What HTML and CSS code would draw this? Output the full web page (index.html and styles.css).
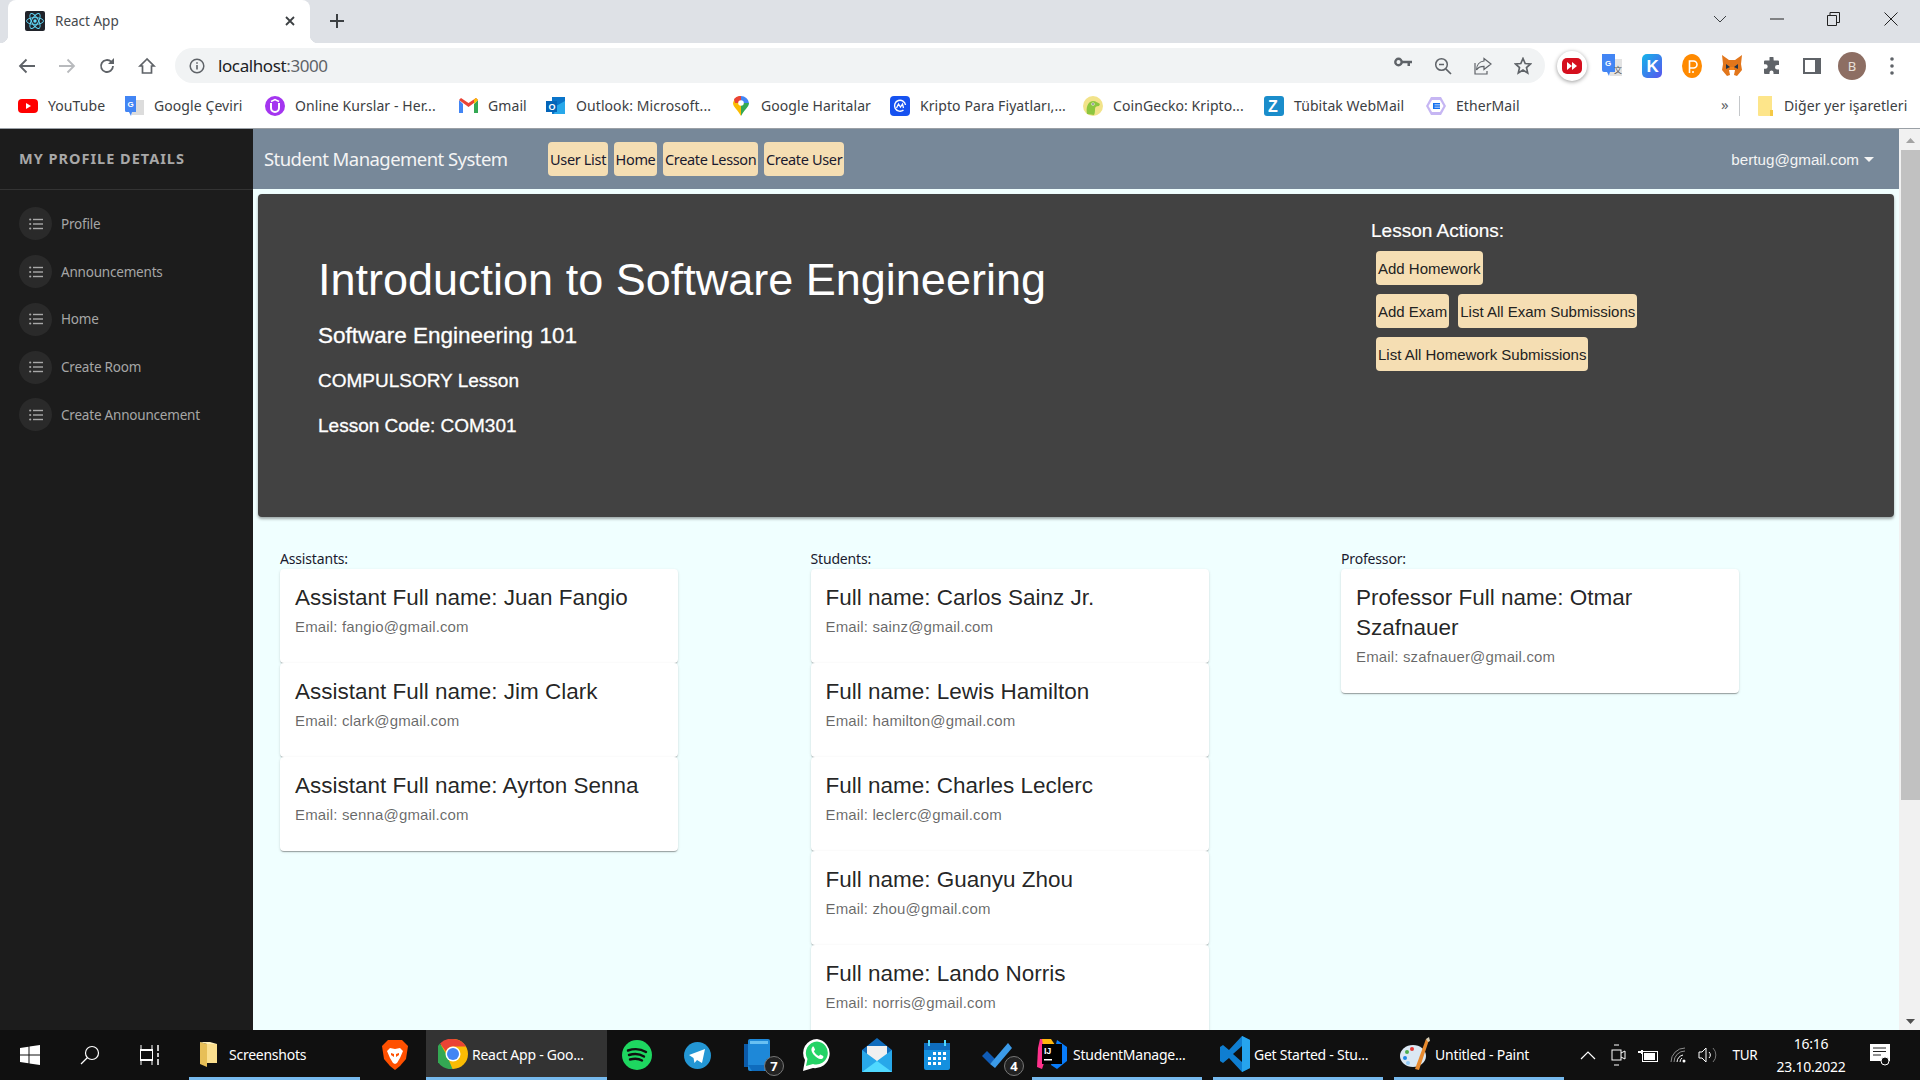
FILE: index.html
```html
<!DOCTYPE html>
<html lang="tr">
<head>
<meta charset="utf-8">
<title>React App</title>
<link rel="stylesheet" href="styles.css">
</head>
<body>
<svg class="defs" width="0" height="0" aria-hidden="true">
  <symbol id="list" viewBox="0 0 14 12"><g fill="#a8a8a8"><circle cx="1.2" cy="1.5" r="1.1"/><circle cx="1.2" cy="6" r="1.1"/><circle cx="1.2" cy="10.5" r="1.1"/><rect x="4" y=".8" width="10" height="1.4"/><rect x="4" y="5.3" width="10" height="1.4"/><rect x="4" y="9.8" width="10" height="1.4"/></g></symbol>
</svg>

<div class="tabstrip">
  <div class="tab">
    <span class="favicon"><svg width="20" height="20" viewBox="0 0 20 20"><rect width="20" height="20" rx="2" fill="#20232a"/><g fill="none" stroke="#61dafb" stroke-width=".9"><ellipse cx="10" cy="10" rx="8.5" ry="3.4"/><ellipse cx="10" cy="10" rx="8.5" ry="3.4" transform="rotate(60 10 10)"/><ellipse cx="10" cy="10" rx="8.5" ry="3.4" transform="rotate(120 10 10)"/></g><circle cx="10" cy="10" r="1.7" fill="#61dafb"/></svg></span>
    <span class="tab-title">React App</span>
    <svg class="tab-close" width="12" height="12" viewBox="0 0 12 12"><path d="M2 2l8 8M10 2l-8 8" stroke="#3c4043" stroke-width="1.8"/></svg>
  </div>
  <svg class="newtab" width="16" height="16" viewBox="0 0 16 16"><path d="M8 1v14M1 8h14" stroke="#3c4043" stroke-width="2"/></svg>
  <div class="winctl">
    <span class="win win-chev"><svg width="14" height="8" viewBox="0 0 14 8"><path d="M1 1l6 6 6-6" fill="none" stroke="#3c4043"/></svg></span>
    <span class="win win-min"><svg width="14" height="2" viewBox="0 0 14 2"><path d="M0 1h14" stroke="#222"/></svg></span>
    <span class="win"><svg width="13" height="14" viewBox="0 0 13 14"><path d="M.5 3.5h9v10h-9zM3 3.5V.5h9.500v10H9.500" fill="none" stroke="#222"/></svg></span>
    <span class="win"><svg width="14" height="14" viewBox="0 0 14 14"><path d="M.5.5l13 13M13.500.5l-13 13" stroke="#222"/></svg></span>
  </div>
</div>

<div class="toolbar">
  <span class="tb"><svg width="18" height="16" viewBox="0 0 18 16"><path d="M17 8H2M8.500 1.500L2 8l6.500 6.500" fill="none" stroke="#5f6368" stroke-width="1.800"/></svg></span>
  <span class="tb"><svg width="18" height="16" viewBox="0 0 18 16"><path d="M1 8h15M9.500 1.500L16 8l-6.500 6.500" fill="none" stroke="#b8babd" stroke-width="1.800"/></svg></span>
  <span class="tb"><svg width="18" height="18" viewBox="0 0 18 18"><path d="M15 9a6 6 0 1 1-1.800-4.300" fill="none" stroke="#5f6368" stroke-width="1.800"/><path d="M16 1v6h-6z" fill="#5f6368"/></svg></span>
  <span class="tb"><svg width="18" height="18" viewBox="0 0 18 18"><path d="M9 2L2 9h2.500v7h9V9H16z" fill="none" stroke="#5f6368" stroke-width="1.700"/></svg></span>
  <div class="omni">
    <svg class="omni-info" width="16" height="16" viewBox="0 0 16 16"><circle cx="8" cy="8" r="6.800" fill="none" stroke="#5f6368" stroke-width="1.500"/><path d="M8 7v4.500M8 4.200v1.600" stroke="#5f6368" stroke-width="1.600"/></svg>
    <span class="omni-url"><span class="url-host">localhost</span>:3000</span>
    <div class="omni-right">
      <span class="oi"><svg width="18" height="10" viewBox="0 0 18 10"><circle cx="4.500" cy="5" r="3.200" fill="none" stroke="#5f6368" stroke-width="2.400"/><path d="M8 3.800h10v2.500h-2V9h-2.500V6.300H8z" fill="#5f6368"/></svg></span>
      <span class="oi"><svg width="18" height="18" viewBox="0 0 18 18"><circle cx="7.500" cy="7.500" r="5.800" fill="none" stroke="#5f6368" stroke-width="1.500"/><path d="M11.800 11.800L17 17" stroke="#5f6368" stroke-width="1.700"/><path d="M5 7.500h5" stroke="#5f6368" stroke-width="1.500"/></svg></span>
      <span class="oi"><svg width="18" height="18" viewBox="0 0 18 18"><path d="M10 1.500l7 5.500-7 5.500V9.300C6 9.300 3.500 11 2.500 13c0-5 3-8.500 7.500-9z" fill="none" stroke="#5f6368" stroke-width="1.200"/><path d="M1 6v11h12v-3" fill="none" stroke="#5f6368" stroke-width="1.200"/></svg></span>
      <span class="oi"><svg width="18" height="18" viewBox="0 0 18 18"><path d="M9 1.500l2.200 5 5.300.5-4 3.600 1.200 5.300L9 13.100l-4.700 2.800 1.200-5.300-4-3.600 5.300-.5z" fill="none" stroke="#5f6368" stroke-width="1.700"/></svg></span>
    </div>
  </div>
  <span class="ext"><span class="ff-badge"><svg width="20" height="16" viewBox="0 0 20 16"><rect width="20" height="16" rx="5" fill="#d50f1e"/><path d="M5 4l5 4-5 4zM10 4l5 4-5 4z" fill="#fff"/></svg></span></span>
  <span class="ext"><svg width="20" height="24" viewBox="0 0 20 24"><rect x="8" y="5" width="12" height="17" fill="#e3e3e3"/><path d="M0 0h13v18H8l-1 4-2-4H2a2 2 0 0 1-2-2z" fill="#4285f4"/><text x="3" y="12" class="svg-g">G</text><text x="12" y="19" class="svg-x">文</text></svg></span>
  <span class="ext"><svg width="20" height="24" viewBox="0 0 20 24"><defs><linearGradient id="kg" x1="0" y1="0" x2="1" y2="1"><stop offset="0" stop-color="#13b6e9"/><stop offset="1" stop-color="#5a54ee"/></linearGradient></defs><rect width="20" height="24" rx="5" fill="url(#kg)"/><text x="4.500" y="18" class="svg-k">K</text></svg></span>
  <span class="ext"><svg width="20" height="24" viewBox="0 0 20 24"><ellipse cx="10" cy="12" rx="10" ry="12" fill="#ff8a00"/><path d="M7.500 19V7h4a3.500 3.500 0 0 1 0 7H8" fill="none" stroke="#fff" stroke-width="1.600"/><circle cx="11" cy="18" r="1" fill="#fff"/></svg></span>
  <span class="ext"><svg width="22" height="24" viewBox="0 0 22 24"><path d="M1 1l7 5h6l7-5-1 9 1 6-5 6-3-1H9l-3 1-5-6 1-6z" fill="#e2761b"/><path d="M8 16h6l-1 5H9z" fill="#fff"/><path d="M5 10l4 3-4 2zM17 10l-4 3 4 2z" fill="#233447"/><path d="M9 13h4v3H9z" fill="#f6851b"/></svg></span>
  <span class="ext"><svg width="18" height="18" viewBox="0 0 18 18"><path d="M6.500 1a2 2 0 0 1 4 0l.2 2.500H15a1 1 0 0 1 1 1V8h-1.700a2.300 2.300 0 0 0 0 4.600H16V17H10.500v-1.500a2 2 0 0 0-4 0V17H2a1 1 0 0 1-1-1v-4.300h1.500a2.200 2.200 0 0 0 0-4.400H1V4.500a1 1 0 0 1 1-1h4.500z" fill="#5f6368"/></svg></span>
  <span class="ext"><svg width="18" height="16" viewBox="0 0 18 16"><rect width="18" height="16" fill="#5f6368"/><rect x="2" y="2" width="10" height="12" fill="#fff"/></svg></span>
  <span class="ext"><span class="avatar">B</span></span>
  <span class="ext"><svg width="4" height="18" viewBox="0 0 4 18"><circle cx="2" cy="2" r="1.800" fill="#5f6368"/><circle cx="2" cy="9" r="1.800" fill="#5f6368"/><circle cx="2" cy="16" r="1.800" fill="#5f6368"/></svg></span>
</div>

<div class="bookmarks">
  <a class="bm bm-yt"><svg width="20" height="14" viewBox="0 0 20 14"><rect width="20" height="14" rx="4" fill="#f00"/><path d="M8 4l5 3-5 3z" fill="#fff"/></svg>YouTube</a>
  <a class="bm bm-gt"><svg width="19" height="20" viewBox="0 0 19 20"><rect x="7" y="4" width="12" height="15" fill="#dcdcdc"/><path d="M0 0h11v16H7l-1 4-2-4H1.500A1.500 1.500 0 0 1 0 14.500z" fill="#4285f4"/><text x="2.500" y="10.500" class="svg-g">G</text></svg>Google Çeviri</a>
  <a class="bm bm-ud"><svg width="20" height="20" viewBox="0 0 20 20"><circle cx="10" cy="10" r="10" fill="#a435f0"/><path d="M6 7v5a4 4 0 0 0 8 0V7" fill="none" stroke="#fff" stroke-width="2"/><path d="M6 5.500l4-2 4 2" fill="none" stroke="#fff" stroke-width="1.500"/></svg>Online Kurslar - Her...</a>
  <a class="bm bm-gm"><svg width="19" height="15" viewBox="0 0 19 15"><path d="M0 2v13h4V6z" fill="#4285f4"/><path d="M15 6v9h4V2z" fill="#34a853"/><path d="M0 2l9.500 7L19 2l-2-2-7.500 5L2 0z" fill="#ea4335"/><path d="M15 6l4-4-2-2-2 1.500z" fill="#fbbc04"/></svg>Gmail</a>
  <a class="bm bm-ol"><svg width="20" height="20" viewBox="0 0 20 20"><path d="M6 1h13v17H6z" fill="#0a74c9"/><path d="M10 10l9-5v13H8z" fill="#28a8ea"/><rect y="5" width="11" height="11" fill="#0364b8"/><text x="2.500" y="13.500" class="svg-o">O</text></svg>Outlook: Microsoft...</a>
  <a class="bm bm-gmap"><svg width="16" height="20" viewBox="0 0 16 20"><path d="M8 20C5 14 0 11 0 7a8 8 0 0 1 8-7z" fill="#fbbc04"/><path d="M8 20c3-6 8-9 8-13H8z" fill="#34a853"/><path d="M8 0a8 8 0 0 1 8 7H8z" fill="#4285f4"/><path d="M1 3a8 8 0 0 1 7-3v7H2z" fill="#ea4335"/><circle cx="8" cy="7" r="2.800" fill="#fff"/></svg>Google Haritalar</a>
  <a class="bm bm-cmc"><svg width="20" height="20" viewBox="0 0 20 20"><rect width="20" height="20" rx="4" fill="#1652f0"/><path d="M15.500 9a5.500 5.500 0 1 0-2 5" fill="none" stroke="#fff" stroke-width="1.400"/><path d="M6.500 12l2-4 2 3 2-3 1 4" fill="none" stroke="#fff" stroke-width="1.300"/></svg>Kripto Para Fiyatları,...</a>
  <a class="bm bm-cg"><svg width="20" height="20" viewBox="0 0 20 20"><circle cx="10" cy="10" r="10" fill="#f2e38a"/><path d="M4 18c-1-6 0-12 6-13 3 0 5 2 7 3l-1 2c-3 0-4 1-4 3s0 4-1 6z" fill="#8dc63f"/><circle cx="10" cy="8" r="1.600" fill="#fff"/><circle cx="10" cy="8" r=".8" fill="#333"/></svg>CoinGecko: Kripto...</a>
  <a class="bm bm-tb"><svg width="20" height="20" viewBox="0 0 20 20"><rect width="20" height="20" rx="3" fill="#1a8dcb"/><text x="4" y="16" class="svg-z">Z</text></svg>Tübitak WebMail</a>
  <a class="bm bm-em"><svg width="20" height="20" viewBox="0 0 20 20"><path d="M5 1h10l5 9-5 9H5l-5-9z" fill="#c6b6f3"/><path d="M6 4h8l3.500 6L14 16H6l-3.500-6z" fill="#fff"/><path d="M7 7h7v1.500H8.500v.8H14v1.400H8.500v.8H14V13H7z" fill="#1470ef"/></svg>EtherMail</a>
  <span class="bm-more">»</span>
  <span class="bm-sep"></span>
  <a class="bm bm-other"><svg width="15" height="20" viewBox="0 0 15 20"><path d="M0 1a1 1 0 0 1 1-1h13v20H1a1 1 0 0 1-1-1z" fill="#fde58a"/><path d="M12 14h3v6h-3z" fill="#f5c945"/></svg>Diğer yer işaretleri</a>
</div>

<div class="viewport">
  <aside class="sidebar">
    <div class="side-head">MY PROFILE DETAILS</div>
    <nav class="side-nav">
      <a class="side-item"><span class="side-ic"><svg width="14" height="12"><use href="#list"/></svg></span>Profile</a>
      <a class="side-item"><span class="side-ic"><svg width="14" height="12"><use href="#list"/></svg></span>Announcements</a>
      <a class="side-item"><span class="side-ic"><svg width="14" height="12"><use href="#list"/></svg></span>Home</a>
      <a class="side-item"><span class="side-ic"><svg width="14" height="12"><use href="#list"/></svg></span>Create Room</a>
      <a class="side-item"><span class="side-ic"><svg width="14" height="12"><use href="#list"/></svg></span>Create Announcement</a>
    </nav>
  </aside>

  <main class="main">
    <header class="navbar">
      <span class="brand">Student Management System</span>
      <div class="navlinks">
        <button class="wheat">User List</button>
        <button class="wheat">Home</button>
        <button class="wheat">Create Lesson</button>
        <button class="wheat">Create User</button>
      </div>
      <span class="user">bertug@gmail.com<i class="caret"></i></span>
    </header>

    <section class="hero">
      <div class="hero-left">
        <h1>Introduction to Software Engineering</h1>
        <h2>Software Engineering 101</h2>
        <h3>COMPULSORY Lesson</h3>
        <h3 class="code">Lesson Code: COM301</h3>
      </div>
      <div class="hero-right">
        <h4>Lesson Actions:</h4>
        <div class="act-row"><button class="act">Add Homework</button></div>
        <div class="act-row"><button class="act">Add Exam</button><button class="act">List All Exam Submissions</button></div>
        <div class="act-row"><button class="act">List All Homework Submissions</button></div>
      </div>
    </section>

    <section class="cols">
      <div class="col">
        <div class="col-label">Assistants:</div>
        <article class="card"><h5>Assistant Full name: Juan Fangio</h5><p>Email: fangio@gmail.com</p></article>
        <article class="card"><h5>Assistant Full name: Jim Clark</h5><p>Email: clark@gmail.com</p></article>
        <article class="card"><h5>Assistant Full name: Ayrton Senna</h5><p>Email: senna@gmail.com</p></article>
      </div>
      <div class="col">
        <div class="col-label">Students:</div>
        <article class="card"><h5>Full name: Carlos Sainz Jr.</h5><p>Email: sainz@gmail.com</p></article>
        <article class="card"><h5>Full name: Lewis Hamilton</h5><p>Email: hamilton@gmail.com</p></article>
        <article class="card"><h5>Full name: Charles Leclerc</h5><p>Email: leclerc@gmail.com</p></article>
        <article class="card"><h5>Full name: Guanyu Zhou</h5><p>Email: zhou@gmail.com</p></article>
        <article class="card"><h5>Full name: Lando Norris</h5><p>Email: norris@gmail.com</p></article>
      </div>
      <div class="col">
        <div class="col-label">Professor:</div>
        <article class="card"><h5>Professor Full name: Otmar Szafnauer</h5><p>Email: szafnauer@gmail.com</p></article>
      </div>
    </section>
  </main>

  <div class="scrollbar">
    <svg class="sb-arrow" width="9" height="5" viewBox="0 0 9 5"><path d="M4.500 0L9 5H0z" fill="#a3a3a3"/></svg>
    <div class="sb-thumb"></div>
    <svg class="sb-arrow sb-down" width="9" height="5" viewBox="0 0 9 5"><path d="M4.500 5L9 0H0z" fill="#505050"/></svg>
  </div>
</div>

<footer class="taskbar">
  <span class="tk tk-win"><svg width="20" height="20" viewBox="0 0 20 20"><path d="M0 3l8.500-1.200v7.700H0zM9.500 1.600L20 0v9.500H9.500zM0 10.500h8.500v7.700L0 17zM9.500 10.500H20V20L9.500 18.400z" fill="#fff"/></svg></span>
  <span class="tk tk-search"><svg width="20" height="20" viewBox="0 0 20 20"><circle cx="12" cy="8" r="6.500" fill="none" stroke="#fff" stroke-width="1.200"/><path d="M7.500 12.500L1 19" stroke="#fff" stroke-width="1.200"/></svg></span>
  <span class="tk tk-view"><svg width="20" height="20" viewBox="0 0 20 20"><path d="M0 4.500h13M0 15.500h13M1 5v-5M12 5v-5M1 15v5M12 15v5" fill="none" stroke="#fff"/><rect x=".5" y="5.500" width="12" height="9" fill="none" stroke="#fff"/><path d="M18 0v6M18 8v4M18 14v6" stroke="#fff" stroke-width="1.500"/></svg></span>
  <span class="app app-shots"><svg width="18" height="26" viewBox="0 0 18 26"><path d="M0 1l7 2v23l-7-3z" fill="#e7bf57"/><path d="M7 3h10v19H7z" fill="#fbdf8e"/><path d="M0 1h10l7 2H7z" fill="#fff0b8"/></svg><span>Screenshots</span></span>
  <span class="tk tk-brave"><svg width="26" height="30" viewBox="0 0 26 30"><path d="M6 0h14l3 3 3 3-2 13-6 7-5 4-5-4-6-7L0 6l3-3z" fill="#ff5000"/><path d="M8 8l5 1 5-1 3 3-3 7-3 5-2 1-2-1-3-5-3-7z" fill="#fff"/><path d="M9 13l3 1v3l-3-2zM17 13l-3 1v3l3-2z" fill="#ff5000"/></svg></span>
  <span class="app app-active app-chrome"><svg width="30" height="30" viewBox="0 0 30 30"><circle cx="15" cy="15" r="15" fill="#fbbc04"/><path d="M15 0a15 15 0 0 1 13 7.500H15a7.500 7.500 0 0 0-7 5L2 4.500A15 15 0 0 1 15 0z" fill="#ea4335"/><path d="M2 4.500l6.500 11 6 14.500A15 15 0 0 1 2 4.500z" fill="#34a853"/><circle cx="15" cy="15" r="7.500" fill="#fff"/><circle cx="15" cy="15" r="6" fill="#4285f4"/></svg><span>React App - Goo...</span></span>
  <span class="tk tk-spot"><svg width="30" height="30" viewBox="0 0 30 30"><circle cx="15" cy="15" r="15" fill="#1ed760"/><path d="M6 10.500c6-2 13-1.500 18 1.500M7 15c5-1.500 11-1 15 1.500M8 19.500c4-1 9-.8 12 1" fill="none" stroke="#101010" stroke-width="2.400" stroke-linecap="round"/></svg></span>
  <span class="tk tk-tg"><svg width="27" height="27" viewBox="0 0 27 27"><circle cx="13.500" cy="13.500" r="13.500" fill="#2396d4"/><path d="M5 13l16-6-3 14-5-3-2.500 3-1-5z" fill="#fff"/></svg></span>
  <span class="tk tk-phone"><svg width="26" height="32" viewBox="0 0 26 32"><path d="M0 5h7v23H0z" fill="#0b5aa8"/><rect x="4" width="22" height="32" rx="2" fill="#1e88d8"/><path d="M6 2h18v3H6z" fill="#69c0f2"/><path d="M4 26h16v6H8z" fill="#0f6cbd"/></svg><span class="badge">7</span></span>
  <span class="tk tk-wa"><svg width="30" height="36" viewBox="0 0 30 36"><path d="M15 2a14 14 0 0 0-12 21L1 34l10-3A14 14 0 1 0 15 2z" fill="#fff"/><path d="M15 4.500A11.500 11.500 0 0 0 5.500 22l-1.500 7 7-2A11.500 11.500 0 1 0 15 4.500z" fill="#25d366"/><path d="M10.500 10c-2 2-1 5 1.500 8s6 5 8.500 3.500c1-.7 1-2 .7-2.500l-3-1.500-1.300 1.500c-2-.7-4-2.700-5-4.800l1.200-1.400-1.300-3c-.5-.5-1.500-.5-1.300-.3z" fill="#fff"/></svg></span>
  <span class="tk tk-mail"><svg width="30" height="34" viewBox="0 0 30 34"><path d="M15 0L0 12v22h30V12z" fill="#0f6cbd"/><path d="M5 8h20v12l-10 5-10-5z" fill="#f0f0f0"/><path d="M0 12l15 11 15-11v22H0z" fill="#28a8ea"/><path d="M0 34l15-11 15 11z" fill="#50d9ff"/></svg></span>
  <span class="tk tk-cal"><svg width="26" height="30" viewBox="0 0 26 30"><rect y="3" width="26" height="27" rx="2" fill="#1490df"/><rect y="3" width="26" height="7" fill="#0f6cbd"/><path d="M4 0h2v6H4zM20 0h2v6h-2z" fill="#50d9ff"/><g fill="#fff"><rect x="9" y="12" width="3" height="3"/><rect x="14" y="12" width="3" height="3"/><rect x="19" y="12" width="3" height="3"/><rect x="4" y="17" width="3" height="3"/><rect x="9" y="17" width="3" height="3"/><rect x="14" y="17" width="3" height="3"/><rect x="19" y="17" width="3" height="3"/><rect x="4" y="22" width="3" height="3"/><rect x="9" y="22" width="3" height="3"/><rect x="14" y="22" width="3" height="3"/></g></svg></span>
  <span class="tk tk-todo"><svg width="30" height="26" viewBox="0 0 30 26"><path d="M0 14l5-5 8 8-5 5z" fill="#0f5bb5"/><path d="M8 22L26 1l4 5-17 20z" fill="#3b9ae8"/></svg><span class="badge">4</span></span>
  <span class="app app-ij"><svg width="30" height="30" viewBox="0 0 30 30"><path d="M3 0h9l2 4-9 26-5-2L1 9z" fill="#ff318c"/><path d="M5 0h9l4 6H6z" fill="#fdb60d"/><path d="M20 1l10 7v14l-10 8-6-4z" fill="#087cfa"/><rect x="5" y="5" width="20" height="20" fill="#000"/><text x="7" y="15" class="svg-ij">IJ</text><rect x="7" y="20" width="8" height="1.500" fill="#fff"/></svg><span>StudentManage...</span></span>
  <span class="app app-vs"><svg width="30" height="36" viewBox="0 0 30 36"><path d="M22 0l8 4v28l-8 4-13-14-6 5-3-2V11l3-2 6 5zM22 10l-9 8 9 8z" fill="#0f7ed1"/><path d="M22 0l8 4v28l-8 4z" fill="#26a4ee"/></svg><span>Get Started - Stu...</span></span>
  <span class="app app-paint"><svg width="30" height="34" viewBox="0 0 30 34"><ellipse cx="13" cy="19" rx="13" ry="11" fill="#dbe8f3"/><circle cx="7" cy="15" r="2" fill="#4caf50"/><circle cx="12" cy="12" r="2" fill="#e53935"/><circle cx="5" cy="21" r="2" fill="#1e88e5"/><circle cx="8" cy="26" r="2" fill="#90caf9"/><path d="M15 32L26 2l3 1-10 30z" fill="#e88a2e"/><path d="M26 2l3-2 1 4-2 1z" fill="#d9d0b8"/></svg><span>Untitled - Paint</span></span>
  <span class="tray t-up"><svg width="16" height="9" viewBox="0 0 16 9"><path d="M1 8l7-7 7 7" fill="none" stroke="#fff" stroke-width="1.200"/></svg></span>
  <span class="tray"><svg width="15" height="22" viewBox="0 0 15 22"><rect x="1" y="6" width="9" height="10" fill="none" stroke="#fff"/><path d="M10 9l4-2v8l-4-2M3 1h5M3 21h5" fill="none" stroke="#fff"/></svg></span>
  <span class="tray"><svg width="20" height="13" viewBox="0 0 20 13"><path d="M0 2h3v2H0zM3 1h2v4H3z" fill="#fff"/><rect x="4.500" y="2.500" width="15" height="10" fill="none" stroke="#fff"/><rect x="6" y="4" width="11" height="7" fill="#fff"/></svg></span>
  <span class="tray"><svg width="16" height="16" viewBox="0 0 16 16"><path d="M1 15A14 14 0 0 1 15 1M4 15A11 11 0 0 1 15 4" fill="none" stroke="#8e8e8e"/><path d="M7 15A8 8 0 0 1 13 8M10 15a5 5 0 0 1 2-4" fill="none" stroke="#fff"/><circle cx="14" cy="14" r="1.500" fill="#fff"/></svg></span>
  <span class="tray"><svg width="20" height="18" viewBox="0 0 20 18"><path d="M1 6h3l4-4v14l-4-4H1z" fill="none" stroke="#fff"/><path d="M11 6a4 4 0 0 1 0 6" fill="none" stroke="#fff"/><path d="M15 2a10 10 0 0 1 0 14" fill="none" stroke="#777"/></svg></span>
  <span class="tray-lang">TUR</span>
  <span class="clock"><span>16:16</span><span>23.10.2022</span></span>
  <span class="notif"><svg width="20" height="22" viewBox="0 0 20 22"><path d="M0 0h20v17H0z" fill="#fff"/><path d="M3 4h13M3 7.500h13M3 11h8" stroke="#222"/><circle cx="15" cy="17" r="4" fill="#101010" stroke="#fff"/></svg></span>
</footer>
</body>
</html>
```

FILE: styles.css
```css
* { box-sizing: border-box; }
html, body { margin: 0; height: 100%; }
body {
  display: flex;
  flex-direction: column;
  height: 100vh;
  overflow: hidden;
  font-family: "Noto Sans", "Open Sans", sans-serif;
  background: #fff;
}
.defs { position: absolute; }
a { color: inherit; text-decoration: none; }
svg { display: block; flex: none; }
button { font: inherit; cursor: pointer; }

/* browser chrome */
.tabstrip { display: flex; align-items: stretch; height: 43px; padding-left: 8px; background: #dee1e6; flex: none; }
.tab { position: relative; display: flex; align-items: center; width: 302px; background: #fff; border-radius: 8px 8px 0 0; padding: 0 14px 2px 17px; font-size: 13.5px; letter-spacing: 0; color: #45494d; }
.tab::before, .tab::after { content: ""; position: absolute; bottom: 0; width: 8px; height: 8px; }
.tab::before { left: -8px; background: radial-gradient(circle at 0 0, #dee1e6 8px, #fff 8.5px); }
.tab::after { right: -8px; background: radial-gradient(circle at 100% 0, #dee1e6 8px, #fff 8.5px); }
.favicon { margin-right: 10px; }
.tab-close { margin-left: auto; margin-right: 0; }
.newtab { align-self: center; margin-left: 19px; margin-top: -1px; }
.winctl { display: flex; margin-left: auto; }
.win { width: 58px; display: flex; align-items: center; justify-content: center; padding-bottom: 6px; }
.win-chev { width: 52px; }
.win-min { padding-left: 3px; }

.toolbar { display: flex; align-items: center; height: 45px; padding: 0 8px 0 7px; background: #fff; flex: none; }
.tb { width: 40px; display: flex; justify-content: center; }
.omni { display: flex; align-items: center; flex: 1; height: 35px; margin: 0 7px 0 8px; padding-left: 14px; background: #f1f3f4; border-radius: 18px; }
.omni-url { margin-left: 13px; font-size: 17px; letter-spacing: -.4px; color: #5f6368; }
.url-host { color: #202124; }
.omni-right { display: flex; margin-left: auto; padding-right: 2px; }
.oi { width: 40px; display: flex; justify-content: center; }
.ext { width: 40px; display: flex; justify-content: center; align-items: center; }
.ff-badge { width: 30px; height: 30px; border-radius: 50%; background: #fff; box-shadow: 0 1px 4px rgba(0,0,0,.4); display: flex; align-items: center; justify-content: center; }
.avatar { width: 28px; height: 28px; border-radius: 50%; background: #8d6e63; color: #e8e0dc; font-size: 13px; display: flex; align-items: center; justify-content: center; }
.svg-g { font: 700 8px "Liberation Sans", sans-serif; fill: #fff; }
.svg-x { font: 8px "Noto Sans CJK SC", sans-serif; fill: #555; }
.svg-k { font: 700 17px "Liberation Sans", sans-serif; fill: #fff; }
.svg-o { font: 700 9px "Liberation Sans", sans-serif; fill: #fff; }
.svg-z { font: 700 16px "Liberation Sans", sans-serif; fill: #fff; }
.svg-ij { font: 700 9px "Liberation Sans", sans-serif; fill: #fff; }

.bookmarks { display: flex; align-items: center; height: 41px; padding: 0 0 5px 18px; background: #fff; border-bottom: 1px solid #9aa0a6; flex: none; }
.bm { display: flex; align-items: center; gap: 10px; font-size: 14px; letter-spacing: .08px; color: #3c4043; white-space: nowrap; }
.bm-yt { width: 107px; }
.bm-gt { width: 140px; }
.bm-ud { width: 194px; }
.bm-gm { width: 87px; }
.bm-ol { width: 187px; }
.bm-gmap { width: 157px; gap: 12px; }
.bm-cmc { width: 193px; }
.bm-cg { width: 181px; }
.bm-tb { width: 162px; }
.bm-em { width: 296px; }
.bm-more { width: 18px; font-size: 15px; color: #5f6368; margin-left: -1px; padding-bottom: 3px; }
.bm-sep { width: 1px; height: 20px; background: #c4c7ca; margin-right: 18px; }
.bm-other { gap: 11px; }

/* page */
.viewport { flex: 1; min-height: 0; display: flex; overflow: hidden; background: #f0ffff; }
.sidebar { width: 253px; flex: none; background: #1c1c1c; color: #a6a6a6; font-size: 13.5px; letter-spacing: -.2px; }
.side-head { height: 61px; padding: 0 0 2px 19px; display: flex; align-items: center; border-bottom: 1px solid #333; font-weight: 700; font-size: 14.5px; letter-spacing: 1px; color: #a8a8a8; }
.side-nav { padding-top: 10px; }
.side-item { display: flex; align-items: center; height: 47.75px; padding-left: 19px; gap: 9px; }
.side-ic { width: 33px; height: 33px; border-radius: 50%; background: #2a2a2a; display: flex; align-items: center; justify-content: center; }

.main { flex: 1; min-width: 0; display: flex; flex-direction: column; }
.navbar { height: 60px; flex: none; display: flex; align-items: center; padding: 0 25px 0 11px; background: #778899; color: #f4f4f4; }
.brand { font-size: 18.5px; letter-spacing: -.55px; width: 284px; white-space: nowrap; padding-bottom: 2px; }
.navlinks { display: flex; gap: 5.5px; }
.wheat { height: 34px; padding: 0 2px; border: 0; border-radius: 4px; background: #f5deb3; color: #1a1a2e; font-size: 14.5px; letter-spacing: -.33px; }
.user { margin-left: auto; display: flex; align-items: center; font: 15.2px "Liberation Sans", sans-serif; color: #f4f4f4; }
.caret { width: 0; height: 0; margin-left: 5px; border: 5px solid transparent; border-top-color: #f4f4f4; border-bottom: 0; }

.hero { flex: none; height: 323px; margin: 5px 5px 0; display: flex; background: #424242; border-radius: 4px; color: #fff; font-family: "Liberation Sans", sans-serif; box-shadow: 0 2px 3px rgba(0,0,0,.35); }
.hero-left { flex: 1; padding: 59px 0 0 60px; }
.hero-left h1 { margin: 0; font-size: 45px; line-height: 53px; font-weight: 400; }
.hero-left h2 { margin: 15px 0 0; font-size: 22.5px; line-height: 29px; font-weight: 400; -webkit-text-stroke: .3px #fff; }
.hero-left h3 { margin: 19px 0 0; font-size: 19px; line-height: 24px; font-weight: 400; -webkit-text-stroke: .3px #fff; }
.hero-left .code { margin-top: 21px; }
.hero-right { width: 523px; padding-top: 26px; }
.hero-right h4 { margin: 0 0 9px; font-size: 19px; line-height: 22px; font-weight: 400; -webkit-text-stroke: .2px #fff; }
.act-row { display: flex; gap: 9px; margin: 0 0 9px 5px; }
.act { height: 34px; padding: 0 2px; border: 0; border-radius: 4px; background: #f5deb3; color: #222; font-size: 15px; font-family: "Liberation Sans", sans-serif; }

.cols { display: grid; grid-template-columns: repeat(3, 530.5px); padding-left: 27px; margin-top: 31px; font-family: "Liberation Sans", sans-serif; }
.col-label { height: 21px; font: 14px/22px "Noto Sans", sans-serif; letter-spacing: -.17px; color: #1a1a2e; }
.card { width: 398px; padding: 14px 15px 26px; background: #fff; border-radius: 4px; box-shadow: 0 2px 1px -1px rgba(0,0,0,.2), 0 1px 1px 0 rgba(0,0,0,.14), 0 1px 3px 0 rgba(0,0,0,.12); }
.card h5 { margin: 0; font-size: 22.5px; line-height: 30px; font-weight: 400; color: rgba(0,0,0,.87); }
.card p { margin: 4px 0 0; font-size: 15px; line-height: 20px; color: rgba(0,0,0,.6); letter-spacing: .15px; }

.scrollbar { position: relative; width: 21px; flex: none; background: #f1f1f1; display: flex; flex-direction: column; align-items: center; padding-top: 9px; padding-left: 2px; }
.sb-thumb { width: 19px; height: 650px; margin-top: 7px; background: #c1c1c1; }
.sb-down { position: absolute; bottom: 6px; left: 7px; }

/* taskbar */
.taskbar { height: 50px; flex: none; display: flex; align-items: stretch; background: #101010; color: #fff; font-size: 14px; letter-spacing: -.25px; }
.tk { position: relative; display: flex; align-items: center; justify-content: center; }
.tk-win { width: 60px; }
.tk-search { width: 60px; }
.tk-view { width: 60px; margin-left: 0; }
.app { display: flex; align-items: center; gap: 11px; border-bottom: 3px solid #76b9ed; padding: 1px 0 0 11px; white-space: nowrap; }
.app-shots { width: 171px; margin-left: 9px; }
.tk-brave { width: 66px; padding-left: 3px; }
.app-active { background: #333; }
.app-chrome { width: 181px; gap: 4px; padding-left: 12px; }
.tk-spot { width: 60px; margin-left: 0; }
.tk-tg { width: 60px; margin-left: 0; }
.tk-phone { width: 60px; margin-left: 0; }
.tk-wa { width: 60px; }
.tk-mail { width: 60px; }
.tk-cal { width: 60px; }
.tk-todo { width: 60px; }
.badge { position: absolute; right: 3px; bottom: 4px; width: 20px; height: 20px; border-radius: 50%; background: #222; border: 1px solid #777; font: 700 13px/18px "Noto Sans", sans-serif; text-align: center; letter-spacing: 0; }
.app-ij { width: 170px; margin-left: 5px; gap: 6px; padding-left: 5px; }
.app-vs { width: 170px; margin-left: 11px; gap: 4px; padding-left: 7px; }
.app-paint { width: 170px; margin-left: 11px; gap: 5px; padding-left: 6px; }
.tray { width: 30px; display: flex; align-items: center; justify-content: center; }
.t-up { margin-left: 9px; }
.tray-lang { width: 48px; display: flex; align-items: center; justify-content: center; margin-left: -2px; font-size: 13.5px; }
.clock { width: 86px; margin-left: -1px; display: flex; flex-direction: column; align-items: center; justify-content: center; gap: 5px; font-size: 14px; line-height: 18px; }
.notif { width: 52px; margin-left: 0; display: flex; align-items: center; justify-content: center; }
```
